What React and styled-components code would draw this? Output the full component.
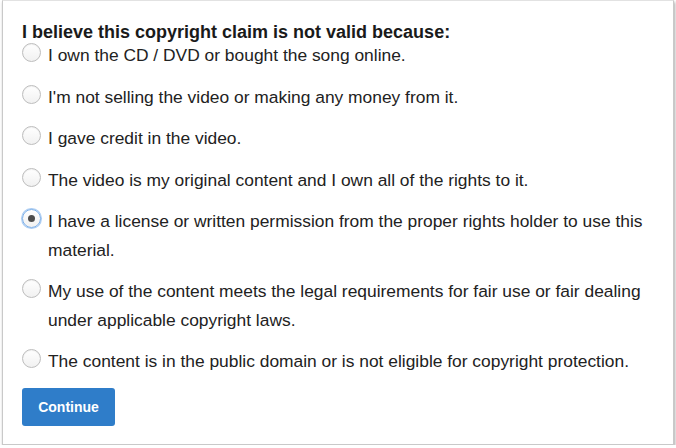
import styled, { createGlobalStyle } from 'styled-components'

const options = [
  'I own the CD / DVD or bought the song online.',
  "I'm not selling the video or making any money from it.",
  'I gave credit in the video.',
  'The video is my original content and I own all of the rights to it.',
  'I have a license or written permission from the proper rights holder to use this material.',
  'My use of the content meets the legal requirements for fair use or fair dealing under applicable copyright laws.',
  'The content is in the public domain or is not eligible for copyright protection.',
]

function App(){
  const selected = 4
  return(
    <>
      <Global />
      <Frame>
        <Heading>I believe this copyright claim is not valid because:</Heading>
        <List>
          {options.map((text, i) => (
            <Row key={i}>
              <Radio checked={i === selected} />
              <Label>{text}</Label>
            </Row>
          ))}
        </List>
        <Button>Continue</Button>
      </Frame>
    </>
  )
}

const Global = createGlobalStyle`
  body{
    margin:0;
    background:#fff;
    font-family:"Liberation Sans", Arial, sans-serif;
  }
`

const Frame = styled.div`
  margin:0 2px;
  width:672px;
  height:445px;
  box-sizing:border-box;
  border:1px solid #c9c9c9;
  border-top-color:#e2e2e2;
  box-shadow:1px 2px 3px rgba(0,0,0,0.35);
  padding:22px 20px 0 19px;
  display:flex;
  flex-direction:column;
  align-items:flex-start;
`

const Heading = styled.div`
  font-size:18px;
  font-weight:bold;
  line-height:18px;
  color:#1a1a1a;
  white-space:nowrap;
`

const List = styled.div`
  display:flex;
  flex-direction:column;
  gap:13px;
`

const Row = styled.div`
  display:flex;
  align-items:flex-start;
  gap:7px;
`

const Radio = styled.span`
  flex:none;
  width:19px;
  height:19px;
  margin-top:2px;
  box-sizing:border-box;
  border-radius:50%;
  border:1px solid ${p => p.checked ? '#7aaee8' : '#bdbdbd'};
  background:linear-gradient(#ffffff, #f1f1f1);
  box-shadow:${p => p.checked ? '0 0 0 1px #a9cbf2' : 'inset 0 1px 1px rgba(0,0,0,0.06)'};
  display:flex;
  align-items:center;
  justify-content:center;

  &::after{
    content:'';
    display:${p => p.checked ? 'block' : 'none'};
    width:7px;
    height:7px;
    border-radius:50%;
    background:#4d4d4d;
  }
`

const Label = styled.span`
  max-width:610px;
  font-size:17.4px;
  line-height:28.5px;
  color:#222;
`

const Button = styled.button`
  margin-top:12px;
  width:93px;
  height:38px;
  border:none;
  border-radius:3px;
  background:#2f7dc9;
  color:#fff;
  font-family:"Liberation Sans", Arial, sans-serif;
  font-size:14px;
  font-weight:bold;
  cursor:pointer;
`

export default App
